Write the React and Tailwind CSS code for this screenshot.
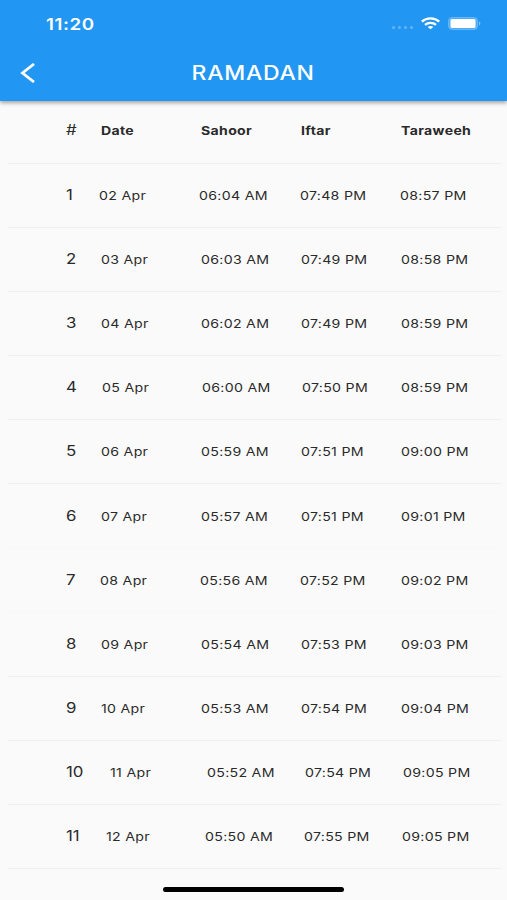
const rows = [
  { no: '1', lead: 'w-[33px]', cells: ['02 Apr', '06:04 AM', '07:48 PM', '08:57 PM'] },
  { no: '2', lead: 'w-[35px]', cells: ['03 Apr', '06:03 AM', '07:49 PM', '08:58 PM'] },
  { no: '3', lead: 'w-[35px]', cells: ['04 Apr', '06:02 AM', '07:49 PM', '08:59 PM'] },
  { no: '4', lead: 'w-[36.5px]', cells: ['05 Apr', '06:00 AM', '07:50 PM', '08:59 PM'] },
  { no: '5', lead: 'w-[35px]', cells: ['06 Apr', '05:59 AM', '07:51 PM', '09:00 PM'] },
  { no: '6', lead: 'w-[35px]', faint: true, cells: ['07 Apr', '05:57 AM', '07:51 PM', '09:01 PM'] },
  { no: '7', lead: 'w-[34px]', faint: true, cells: ['08 Apr', '05:56 AM', '07:52 PM', '09:02 PM'] },
  { no: '8', lead: 'w-[35px]', cells: ['09 Apr', '05:54 AM', '07:53 PM', '09:03 PM'] },
  { no: '9', lead: 'w-[35.5px]', cells: ['10 Apr', '05:53 AM', '07:54 PM', '09:04 PM'] },
  { no: '10', lead: 'w-[44px]', cells: ['11 Apr', '05:52 AM', '07:54 PM', '09:05 PM'] },
  { no: '11', lead: 'w-[40.5px]', cells: ['12 Apr', '05:50 AM', '07:55 PM', '09:05 PM'] },
];

function StatusBar() {
  return (
    <div className="flex h-[46px] items-center justify-between pl-[46px] pr-[26px] pt-[1px]">
      <span className="inline-block origin-left scale-x-[1.17] text-[16px] font-semibold leading-none tracking-[0.5px]">11:20</span>
      <div className="flex items-center">
        <div className="mr-[8px] mt-[8px] flex gap-[3px]">
          <i className="size-[3px] rounded-full bg-white/30" />
          <i className="size-[3px] rounded-full bg-white/30" />
          <i className="size-[3px] rounded-full bg-white/30" />
          <i className="size-[3px] rounded-full bg-white/30" />
        </div>
        <svg width="19" height="13" viewBox="0 0 19 13" fill="none" stroke="white" strokeWidth="2.3">
          <path d="M.8 4.6C5.6.2 13.4.2 18.2 4.6" />
          <path d="M4 7.9c3-2.7 8-2.7 11 0" />
          <path d="M9.5 12.3 6.7 10c1.6-1.4 4-1.4 5.6 0z" fill="white" stroke="none" />
        </svg>
        <svg className="ml-[8px]" width="33" height="13" viewBox="0 0 33 13">
          <rect x=".5" y=".5" width="29" height="12" rx="3.5" fill="white" fillOpacity=".2" stroke="white" strokeOpacity=".25" />
          <rect x="2.5" y="2" width="25" height="9" rx="1.5" fill="white" />
          <path d="M31 4.5c1.8.6 1.8 3.4 0 4z" fill="white" fillOpacity=".45" />
        </svg>
      </div>
    </div>
  );
}

function Row({ no, lead, cells, header, faint }) {
  return (
    <div
      className={`ml-[8px] mr-[6px] flex h-[64.15px] items-center border-b pl-[57.5px] ${header ? 'pb-[5px]' : 'pb-[3px]'} ${faint ? 'border-[#f8f8f8]' : 'border-[#f0f0f0]'}`}
    >
      <div className={`${lead} shrink-0`}>
        <span className="inline-block origin-left scale-x-[1.2] text-[14px]">{no}</span>
      </div>
      {cells.map((cell) => (
        <div key={cell} className="min-w-0 flex-1">
          <span
            className={`inline-block origin-left whitespace-nowrap text-[12px] ${header ? 'scale-x-[1.17] font-bold tracking-[0.3px]' : 'scale-x-[1.18] tracking-[0.25px]'}`}
          >
            {cell}
          </span>
        </div>
      ))}
    </div>
  );
}

export default function App() {
  return (
    <div className="flex h-[900px] w-[507px] flex-col overflow-hidden bg-[#fafafa] font-['Inter',sans-serif] text-[#2a2a2a]">
      <header className="relative h-[101px] shrink-0 bg-[#2196f3] text-white shadow-[0_2px_4px_rgba(0,0,0,0.35)]">
        <StatusBar />
        <div className="grid h-[54px] grid-cols-[1fr_auto_1fr] items-center">
          <svg className="ml-[20px]" width="16" height="20" viewBox="0 0 16 20" fill="none" stroke="white" strokeWidth="2.8">
            <path d="M14 1 2.5 10 14 19" />
          </svg>
          <h1 className="mt-[1px] scale-x-[1.18] text-[19.5px] font-medium leading-none tracking-[0.6px]">RAMADAN</h1>
        </div>
      </header>
      <main className="-mt-[1.4px]">
        <Row header no="#" lead="w-[35px]" cells={['Date', 'Sahoor', 'Iftar', 'Taraweeh']} />
        {rows.map((row) => (
          <Row key={row.no} {...row} />
        ))}
      </main>
      <div className="mx-auto mt-[17.6px] h-[5px] w-[181px] rounded-full bg-black" />
    </div>
  );
}
